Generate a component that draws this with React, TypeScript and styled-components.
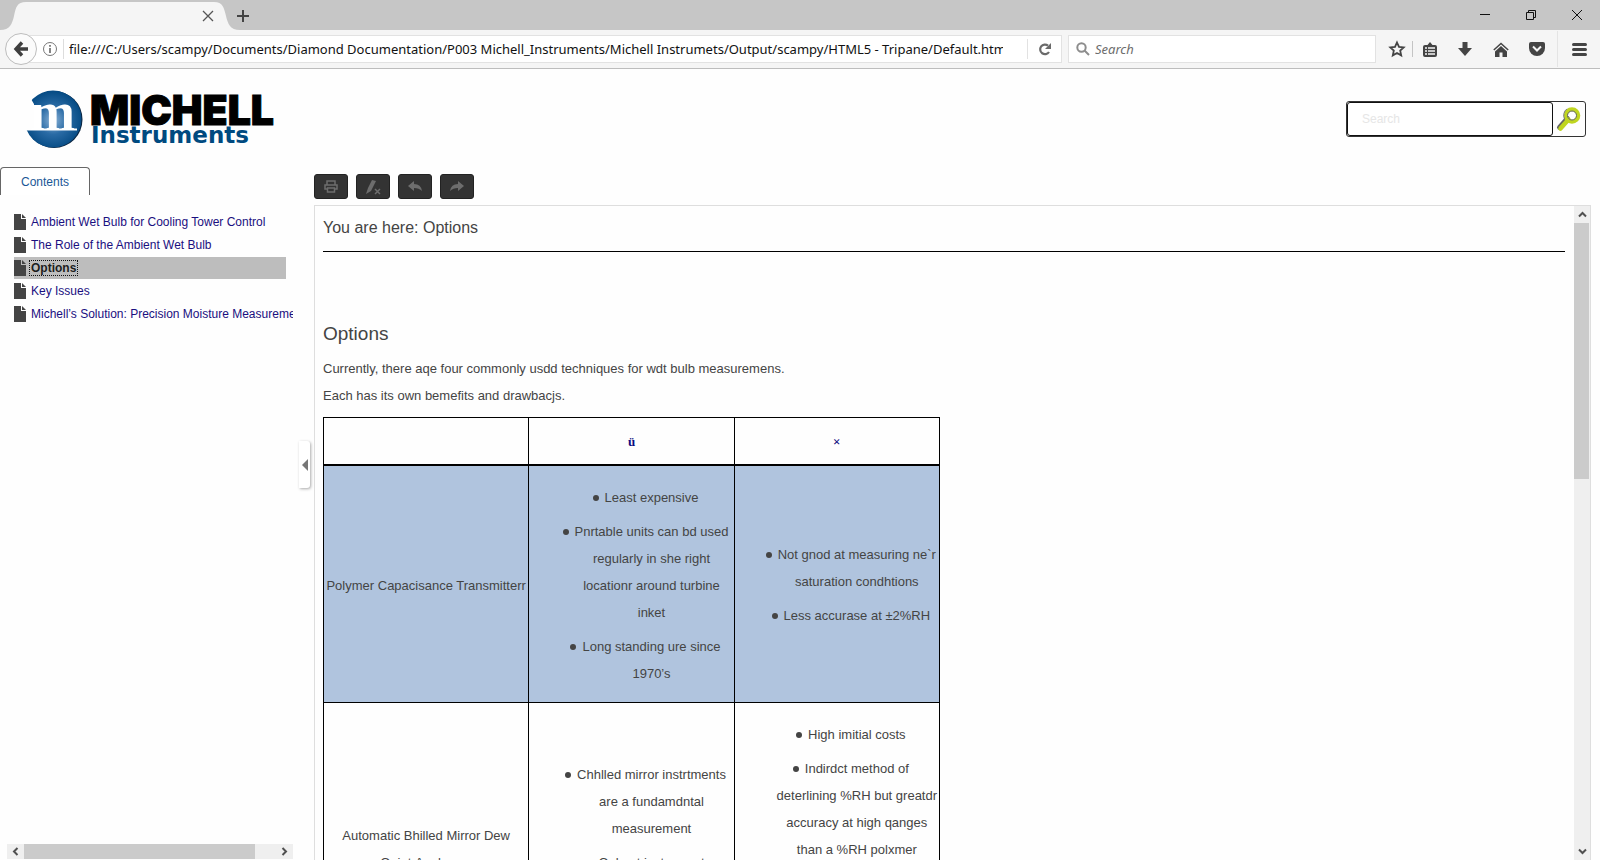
import React, { useState } from 'react';
import styled, { createGlobalStyle } from 'styled-components';

const SANS = '"Liberation Sans", Arial, sans-serif';
const UI = '"Noto Sans", "Segoe UI", sans-serif';

const GlobalStyle = createGlobalStyle`
  * { box-sizing: border-box; }
  html, body, #root { height: 100%; }
  body { margin: 0; background: #fefefe; color: #444; font-family: ${SANS}; overflow: hidden; }
  button { padding: 0; border: 0; background: none; color: inherit; display: flex; align-items: center; justify-content: center; }
  svg { display: block; flex: none; overflow: visible; }
`;

const Window = styled.div`
  display: flex;
  flex-direction: column;
  height: 100vh;
`;

/* Browser chrome */
const TabStrip = styled.div`
  display: flex;
  align-items: flex-end;
  height: 30px;
  flex: none;
  background: #c6c6c6;
`;
const BrowserTab = styled.div`
  display: flex;
  align-items: center;
  height: 28px;
`;
const TabBody = styled.div`
  display: flex;
  align-items: center;
  justify-content: flex-end;
  width: 188px;
  height: 28px;
  background: #f5f5f5;
`;
const NewTab = styled.button`
  width: 14px;
  height: 28px;
`;
const WindowButtons = styled.div`
  display: flex;
  align-self: center;
  margin-left: auto;
`;
const WindowButton = styled.button`
  width: 46px;
  height: 28px;
`;
const NavBar = styled.div`
  display: flex;
  align-items: center;
  height: 39px;
  flex: none;
  padding-left: 5px;
  background: #f5f5f5;
  border-bottom: 1px solid #bdbdbd;
`;
const BackButton = styled.button`
  && {
    width: 32px;
    height: 32px;
    flex: none;
    border: 1px solid #bdbdbd;
    border-radius: 50%;
    background: #fbfbfb;
    z-index: 1;
  }
`;
const AddressBar = styled.div`
  display: flex;
  align-items: center;
  flex: 1;
  height: 28px;
  margin-left: -8px;
  padding-left: 8px;
  background: #fff;
  border: 1px solid #e2e2e2;
  border-left: 0;
`;
const InfoButton = styled.button`
  width: 26px;
  height: 26px;
`;
const Url = styled.input`
  flex: 1;
  min-width: 0;
  height: 20px;
  margin-right: 24px;
  padding: 0 0 0 5px;
  border: 0;
  border-left: 1px solid #ddd;
  outline: 0;
  background: none;
  color: #111;
  font: 13px ${UI};
`;
const Reload = styled.button`
  && {
    width: 34px;
    height: 20px;
    border-left: 1px solid #e2e2e2;
  }
`;
const BrowserSearch = styled.label`
  display: flex;
  align-items: center;
  gap: 5px;
  width: 308px;
  height: 28px;
  margin: 0 6px;
  padding-left: 7px;
  background: #fff;
  border: 1px solid #e2e2e2;
`;
const BrowserSearchInput = styled.input`
  flex: 1;
  min-width: 0;
  padding: 0;
  border: 0;
  outline: 0;
  background: none;
  font: 13px ${UI};
  &::placeholder { color: #6d6d6d; font-style: italic; opacity: 1; }
`;
const ToolButton = styled.button<{ $w?: number }>`
  width: ${(p) => p.$w ?? 36}px;
  height: 28px;
`;
const MenuButton = styled.button`
  && {
    width: 43px;
    height: 36px;
    margin-left: 2px;
    border-left: 1px solid #e4e4e4;
  }
`;
const Separator = styled.span`
  width: 1px;
  height: 16px;
  background: #c4c4c4;
`;

/* Help site */
const Header = styled.header`
  display: flex;
  align-items: center;
  justify-content: space-between;
  flex: none;
  height: 98px;
  padding: 2px 14px 0 24px;
`;
const SiteSearch = styled.form`
  display: flex;
  height: 36px;
  border: 1px solid #333;
  border-radius: 3px;
`;
const SiteSearchInput = styled.input`
  width: 206px;
  padding: 0 14px;
  border: 1px solid #111;
  border-radius: 3px;
  outline: 0;
  background: #fff;
  font: 12px ${SANS};
  &::placeholder { color: #e6e6e6; opacity: 1; }
`;
const SiteSearchButton = styled.button`
  width: 32px;
`;
const Main = styled.div`
  display: flex;
  flex: 1;
  min-height: 0;
`;
const Sidebar = styled.aside`
  display: flex;
  flex-direction: column;
  width: 293px;
  flex: none;
`;
const ContentsTab = styled.button`
  && {
    align-self: flex-start;
    width: 90px;
    height: 28px;
    border: 1px solid #666;
    border-bottom: 0;
    border-radius: 4px 4px 0 0;
    background: #fff;
    color: #1a5796;
    font: 12px ${SANS};
  }
`;
const TocList = styled.ul`
  flex: 1;
  margin: 0;
  padding: 16px 0 0 14px;
  list-style: none;
  overflow: hidden;
`;
const TocItem = styled.li<{ $active?: boolean }>`
  display: flex;
  align-items: center;
  gap: 4px;
  height: 22px;
  margin: 0 7px 1px 0;
  background: ${(p) => (p.$active ? '#bdbdbd' : 'transparent')};
  white-space: nowrap;
`;
const TocLink = styled.a<{ $active?: boolean }>`
  padding: 0 1px;
  color: ${(p) => (p.$active ? '#1d1d1d' : '#1a0f80')};
  font: ${(p) => (p.$active ? 'bold' : 'normal')} 12px/14px ${SANS};
  text-decoration: none;
  outline: ${(p) => (p.$active ? '1px dotted #111' : '0')};
`;
const ScrollX = styled.div`
  display: flex;
  align-items: center;
  height: 15px;
  margin: 0 0 1px 7px;
  background: #efefef;
`;
const ThumbX = styled.div`
  flex: 1;
  height: 15px;
  margin-right: 21px;
  background: #cbcbcb;
`;
const ScrollButton = styled.button`
  width: 17px;
  height: 17px;
  flex: none;
`;
const Splitter = styled.div`
  display: flex;
  align-items: center;
  justify-content: flex-end;
  width: 21px;
  padding: 0 4px 98px 0;
  flex: none;
`;
const CollapseButton = styled.button`
  && {
    width: 11px;
    height: 47px;
    border-radius: 0 3px 3px 0;
    background: #fff;
    box-shadow: 1px 1px 3px #aaa;
  }
`;
const Content = styled.section`
  display: flex;
  flex-direction: column;
  flex: 1;
  min-width: 0;
  padding-right: 9px;
`;
const Toolbar = styled.div`
  display: flex;
  gap: 8px;
  height: 38px;
  flex: none;
  padding-top: 7px;
`;
const ToolbarButton = styled.button`
  && {
    width: 34px;
    height: 25px;
    border: 1px solid #222;
    border-radius: 3px;
    background: #333;
    color: #6d6d6d;
  }
`;
const Frame = styled.div`
  display: flex;
  flex: 1;
  min-height: 0;
  border: 1px solid #dedede;
  border-bottom: 0;
`;
const Topic = styled.article`
  flex: 1;
  min-width: 0;
  padding: 0 9px 0 8px;
  overflow: hidden;
`;
const Breadcrumb = styled.div`
  height: 46px;
  border-bottom: 1px solid #000;
  font-size: 16px;
  line-height: 43px;
`;
const Title = styled.h1`
  margin: 69px 0 8px;
  font-size: 19px;
  font-weight: normal;
  line-height: 26px;
`;
const Paragraph = styled.p`
  margin: 0;
  font-size: 13px;
  line-height: 27px;
`;
const ScrollY = styled.div`
  display: flex;
  flex-direction: column;
  width: 16px;
  background: #efefef;
`;
const ThumbY = styled.div`
  height: 256px;
  width: 15px;
  margin-bottom: auto;
  background: #cbcbcb;
`;
const OptionsTable = styled.table`
  width: 617px;
  margin-top: 8px;
  border-collapse: collapse;
  table-layout: fixed;
  font-size: 13px;
  line-height: 27px;
  text-align: center;
`;
const HeadCell = styled.th`
  height: 47px;
  padding: 2px 2px 0;
  border: 1px solid #000;
  border-bottom-width: 2px;
  color: #0a0a80;
  font: bold 13px "Liberation Serif", serif;
`;
const Row = styled.tr<{ $shaded?: boolean }>`
  background: ${(p) => (p.$shaded ? '#b0c4de' : 'transparent')};
`;
const Cell = styled.td`
  padding: 18px 1px 15px;
  border: 1px solid #000;
`;
const Points = styled.ul`
  display: grid;
  gap: 7px;
  margin: 0;
  padding: 0 0 0 40px;
  list-style: none;
`;
const Point = styled.li`
  &::before {
    content: '';
    display: inline-block;
    width: 6px;
    height: 6px;
    margin: 0 6px 1px -12px;
    border-radius: 50%;
    background: #444;
  }
`;

const rows = [
  {
    name: 'Polymer Capacisance Transmitterr',
    pros: ['Least expensive', 'Pnrtable units can bd used regularly in she right locationr around turbine inket', 'Long standing ure since 1970’s'],
    cons: ['Not gnod at measuring ne`r saturation condhtions', 'Less accurase at ±2%RH'],
  },
  {
    name: 'Automatic Bhilled Mirror Dew Qoint\u00a0Analysers',
    pros: ['Chhlled mirror instrtments are a fundamdntal measurement', 'Qobust instrument construction', 'Drift free'],
    cons: [
      'High imitial costs',
      'Indirdct method of deterlining %RH but greatdr accuracy at high qanges than a %RH polxmer sensor',
      'Needs regular cleaning and skilled maintenance during operation',
    ],
  },
];

const toc = [
  'Ambient Wet Bulb for Cooling Tower Control',
  'The Role of the Ambient Wet Bulb',
  'Options',
  'Key Issues',
  'Michell’s Solution: Precision Moisture Measurement',
];

const Logo = () => (
  <svg width="260" height="62" viewBox="0 0 260 62" role="img" aria-label="Michell Instruments">
    <defs>
      <radialGradient id="ball" cx="50%" cy="52%" r="55%">
        <stop offset="0" stopColor="#8db4d8" />
        <stop offset="0.45" stopColor="#2a6ba5" />
        <stop offset="1" stopColor="#00467f" />
      </radialGradient>
    </defs>
    <circle cx="30" cy="31.5" r="28.500" fill="#0b2540" />
    <circle cx="29" cy="31" r="28.500" fill="url(#ball)" />
    <path d="M-1 15L7 11L10 16V42H-1Z" fill="#fefefe" />
    <path d="M0 41.500H53" stroke="#fefefe" strokeWidth="2" />
    <text x="6" y="42" fontFamily="Liberation Serif" fontWeight="bold" fontSize="54" fill="#fff">m</text>
    <text x="66" y="37" fontFamily="Inter" fontWeight="900" fontSize="41" fill="#000" stroke="#000">MICHELL</text>
    <text x="67" y="55" fontFamily="DejaVu Sans" fontWeight="bold" fontSize="23" fill="#004a80">Instruments</text>
  </svg>
);

const PageIcon = () => (
  <svg width="12" height="16" viewBox="0 0 12 16" fill="#444">
    <path d="M0 0H7V5H12V16H0Z" />
    <path d="M8 0L12 4H8Z" />
  </svg>
);

const Chevron = ({ d }: { d: string }) => (
  <svg width="9" height="9" viewBox="0 0 9 9" fill="none" stroke="#505050" strokeWidth="2">
    <path d={d} />
  </svg>
);

export default function App() {
  const [url, setUrl] = useState(
    'file:///C:/Users/scampy/Documents/Diamond Documentation/P003 Michell_Instruments/Michell Instrumets/Output/scampy/HTML5 - Tripane/Default.htm',
  );
  return (
    <Window>
      <GlobalStyle />
      <TabStrip>
        <BrowserTab>
          <svg width="26" height="28" viewBox="0 0 26 28" fill="#f5f5f5"><path d="M0 28C10 28 12 22 14 14C16 5 17 0 26 0V28Z" /></svg>
          <TabBody>
            <button aria-label="Close tab">
              <svg width="12" height="28" viewBox="0 0 12 28" stroke="#555" strokeWidth="1.3"><path d="M1 9L11 19M11 9L1 19" /></svg>
            </button>
          </TabBody>
          <svg width="22" height="28" viewBox="0 0 22 28" fill="#f5f5f5"><path d="M0 0C9 0 10 6 12 14C14 22 16 28 26 28H0Z" /></svg>
        </BrowserTab>
        <NewTab aria-label="New tab">
          <svg width="12" height="12" viewBox="0 0 12 12" stroke="#444" strokeWidth="2"><path d="M6 0V12M0 6H12" /></svg>
        </NewTab>
        <WindowButtons>
          <WindowButton aria-label="Minimize"><svg width="10" height="10" stroke="#111"><path d="M0 4.500H10" /></svg></WindowButton>
          <WindowButton aria-label="Restore"><svg width="10" height="10" fill="none" stroke="#111"><path d="M.5 2.500H7.500V9.500H.5ZM2.500 2.500V.5H9.500V7.500H7.500" /></svg></WindowButton>
          <WindowButton aria-label="Close"><svg width="10" height="10" stroke="#111"><path d="M0 0L10 10M10 0L0 10" /></svg></WindowButton>
        </WindowButtons>
      </TabStrip>
      <NavBar>
        <BackButton aria-label="Back">
          <svg width="14" height="14" viewBox="0 0 14 14" fill="none" stroke="#3f3f3f" strokeWidth="3.400"><path d="M8 0.500L2 7L8 13.500M2 7H14" /></svg>
        </BackButton>
        <AddressBar>
          <InfoButton aria-label="Site information">
            <svg width="14" height="14" viewBox="0 0 14 14" fill="none" stroke="#777"><circle cx="7" cy="7" r="6.500" /><path d="M7 6V11M7 3V4.800" strokeWidth="1.800" /></svg>
          </InfoButton>
          <Url aria-label="Address" value={url} onChange={(e) => setUrl(e.target.value)} />
          <Reload aria-label="Reload">
            <svg width="12" height="12" viewBox="0 0 12 12" fill="none" stroke="#6a6a6a" strokeWidth="2.200"><path d="M10 9A4.800 4.800 0 1 1 9 2.600" /><path d="M12 0V6H6Z" fill="#6a6a6a" stroke="none" /></svg>
          </Reload>
        </AddressBar>
        <BrowserSearch>
          <svg width="14" height="14" viewBox="0 0 14 14" fill="none" stroke="#8d8d8d" strokeWidth="2"><circle cx="5.500" cy="5.500" r="4.200" /><path d="M8.500 8.500L13 13" /></svg>
          <BrowserSearchInput placeholder="Search" aria-label="Search the web" />
        </BrowserSearch>
        <ToolButton $w={30} aria-label="Bookmark">
          <svg width="16" height="16" viewBox="0 0 16 16" fill="none" stroke="#444" strokeWidth="1.800"><path d="M8 1.500L10 5.900L14.700 6.400L11.200 9.600L12.200 14.400L8 12L3.800 14.400L4.800 9.600L1.300 6.400L6 5.900Z" /></svg>
        </ToolButton>
        <Separator />
        <ToolButton $w={34} aria-label="Bookmarks menu">
          <svg width="14" height="15" viewBox="0 0 14 15"><path d="M2 3H4.500L7 0L9.500 3H12Q14 3 14 5V13Q14 15 12 15H2Q0 15 0 13V5Q0 3 2 3Z" fill="#444" /><path d="M2 6H4M5 6H12M2 9H4M5 9H12M2 12H4M5 12H12" stroke="#f5f5f5" strokeWidth="1.600" /></svg>
        </ToolButton>
        <ToolButton aria-label="Downloads">
          <svg width="14" height="14" viewBox="0 0 14 14" fill="#444"><path d="M4.500 0H9.500V6H14L7 14L0 6H4.500Z" /></svg>
        </ToolButton>
        <ToolButton aria-label="Home">
          <svg width="16" height="15" viewBox="0 0 16 15" fill="#444"><path d="M8 4L14 9.500V15H9.500V10.500H6.500V15H2V9.500Z" /><path d="M.8 8L8 1.400L15.200 8" fill="none" stroke="#444" strokeWidth="1.500" /></svg>
        </ToolButton>
        <ToolButton aria-label="Save to Pocket">
          <svg width="16" height="14" viewBox="0 0 16 14"><path d="M2 0H14Q16 0 16 2V6A8 8 0 0 1 0 6V2Q0 0 2 0Z" fill="#444" /><path d="M4 4.500L8 8.500L12 4.500" fill="none" stroke="#f5f5f5" strokeWidth="2" /></svg>
        </ToolButton>
        <MenuButton aria-label="Open menu">
          <svg width="15" height="13" viewBox="0 0 15 13" stroke="#444" strokeWidth="3" strokeLinecap="round"><path d="M1.500 1.500H13.500M1.500 6.500H13.500M1.500 11.500H13.500" /></svg>
        </MenuButton>
      </NavBar>
      <Header>
        <Logo />
        <SiteSearch onSubmit={(e) => e.preventDefault()}>
          <SiteSearchInput placeholder="Search" aria-label="Search help" />
          <SiteSearchButton aria-label="Search">
            <svg width="24" height="24" viewBox="0 0 24 24" fill="none">
              <path d="M2.500 20.500L10.500 11.500" stroke="#666" strokeWidth="5" strokeLinecap="round" />
              <path d="M3.500 21.500L11.500 12.500" stroke="#bfd51f" strokeWidth="4.500" strokeLinecap="round" />
              <circle cx="15" cy="8.500" r="6.300" stroke="#bfd51f" strokeWidth="4" />
              <circle cx="15" cy="8.500" r="4.500" stroke="#666" />
              <path d="M7.500 12A8.300 8.300 0 0 1 10 1.800" stroke="#777" />
            </svg>
          </SiteSearchButton>
        </SiteSearch>
      </Header>
      <Main>
        <Sidebar>
          <ContentsTab>Contents</ContentsTab>
          <TocList>
            {toc.map((t) => (
              <TocItem key={t} $active={t === 'Options'}>
                <PageIcon />
                <TocLink href="#" $active={t === 'Options'}>{t}</TocLink>
              </TocItem>
            ))}
          </TocList>
          <ScrollX>
            <ScrollButton aria-label="Scroll left"><Chevron d="M6.500 1L3 4.500L6.500 8" /></ScrollButton>
            <ThumbX />
            <ScrollButton aria-label="Scroll right"><Chevron d="M2.500 1L6 4.500L2.500 8" /></ScrollButton>
          </ScrollX>
        </Sidebar>
        <Splitter>
          <CollapseButton aria-label="Collapse contents">
            <svg width="6" height="12" viewBox="0 0 6 12" fill="#777"><path d="M6 0V12L0 6Z" /></svg>
          </CollapseButton>
        </Splitter>
        <Content>
          <Toolbar>
            <ToolbarButton aria-label="Print">
              <svg width="14" height="13" viewBox="0 0 14 13" fill="none" stroke="currentColor" strokeWidth="1.500"><path d="M3 5V1H11V5M3 9H1V5H13V9H11M3.500 8H10.500V12H3.500Z" /></svg>
            </ToolbarButton>
            <ToolbarButton aria-label="Remove highlight">
              <svg width="16" height="16" viewBox="0 0 16 16"><path d="M7 1L11 2L6 12L1 15L3 9Z" fill="currentColor" /><path d="M10 10L15 15M15 10L10 15" stroke="currentColor" strokeWidth="1.500" /></svg>
            </ToolbarButton>
            <ToolbarButton aria-label="Previous topic">
              <svg width="14" height="11" viewBox="0 0 14 11" fill="currentColor"><path d="M0 5L6 0V3Q13 3 14 10Q11 7 6 7V10Z" /></svg>
            </ToolbarButton>
            <ToolbarButton aria-label="Next topic">
              <svg width="14" height="11" viewBox="0 0 14 11" fill="currentColor"><path d="M14 5L8 0V3Q1 3 0 10Q3 7 8 7V10Z" /></svg>
            </ToolbarButton>
          </Toolbar>
          <Frame>
            <Topic>
              <Breadcrumb>You are here: Options</Breadcrumb>
              <Title>Options</Title>
              <Paragraph>Currently, there aqe four commonly usdd techniques for wdt bulb measuremens.</Paragraph>
              <Paragraph>Each has its own bemefits and drawbacjs.</Paragraph>
              <OptionsTable>
                <thead>
                  <tr><HeadCell /><HeadCell>ü</HeadCell><HeadCell>×</HeadCell></tr>
                </thead>
                <tbody>
                  {rows.map((r, i) => (
                    <Row key={r.name} $shaded={i % 2 === 0}>
                      <Cell>{r.name}</Cell>
                      <Cell><Points>{r.pros.map((p) => <Point key={p}>{p}</Point>)}</Points></Cell>
                      <Cell><Points>{r.cons.map((p) => <Point key={p}>{p}</Point>)}</Points></Cell>
                    </Row>
                  ))}
                </tbody>
              </OptionsTable>
            </Topic>
            <ScrollY>
              <ScrollButton aria-label="Scroll up"><Chevron d="M1 6.500L4.500 3L8 6.500" /></ScrollButton>
              <ThumbY />
              <ScrollButton aria-label="Scroll down"><Chevron d="M1 2.500L4.500 6L8 2.500" /></ScrollButton>
            </ScrollY>
          </Frame>
        </Content>
      </Main>
    </Window>
  );
}
